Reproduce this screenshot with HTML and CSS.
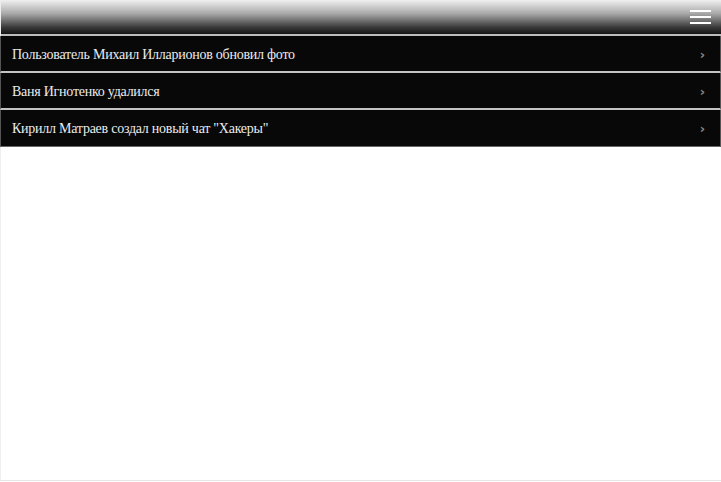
FILE: index.html
```html
<!DOCTYPE html>
<html>
<head>
<meta charset="utf-8">
<link rel="stylesheet" href="styles.css">
</head>
<body>
<div class="page">
  <header class="topbar">
    <button class="menu" aria-label="menu">
      <span></span><span></span><span></span>
    </button>
  </header>
  <ul class="feed">
    <li class="item"><span class="text">Пользователь Михаил Илларионов обновил фото</span><span class="chev">&#8250;</span></li>
    <li class="item"><span class="text">Ваня Игнотенко удалился</span><span class="chev">&#8250;</span></li>
    <li class="item"><span class="text">Кирилл Матраев создал новый чат "Хакеры"</span><span class="chev">&#8250;</span></li>
  </ul>
</div>
</body>
</html>
```
FILE: styles.css
```css
html, body {
  margin: 0;
  padding: 0;
  background: #fff;
}
.page {
  width: 721px;
  height: 481px;
  box-sizing: border-box;
  border-left: 1px solid #eee;
  border-bottom: 1px solid #e6e6e6;
  font-family: "Liberation Serif", "Times New Roman", serif;
}
.topbar {
  height: 34px;
  background: linear-gradient(to bottom, #f0f0f0 0%, #a8a8a8 40%, #3a3a3a 80%, #151515 100%);
  border-bottom: 2px solid #bdbdbd;
  display: flex;
  justify-content: flex-end;
  align-items: center;
  padding-right: 10px;
}
.menu {
  background: none;
  border: 0;
  padding: 0;
  width: 21px;
  height: 14px;
  display: flex;
  flex-direction: column;
  justify-content: space-between;
}
.menu span {
  display: block;
  height: 2px;
  background: #fff;
}
.feed {
  list-style: none;
  margin: 0 0 0 -1px;
  padding: 0;
}
.item {
  height: 35px;
  background: #080808;
  border-left: 1px solid #555;
  border-right: 1px solid #555;
  border-bottom: 2px solid #c4c4c4;
  display: flex;
  align-items: center;
  justify-content: space-between;
  padding: 0 15px 0 11px;
  color: #ececec;
  font-size: 14px;
}
.item:last-child {
  height: 36px;
  border-bottom: 1px solid #666;
}
.text {
  padding-top: 2px;
  letter-spacing: -0.25px;
}
.chev {
  color: #888;
  font-family: "DejaVu Sans", sans-serif;
  font-size: 13px;
  font-weight: bold;
  margin-top: 1px;
}
```
